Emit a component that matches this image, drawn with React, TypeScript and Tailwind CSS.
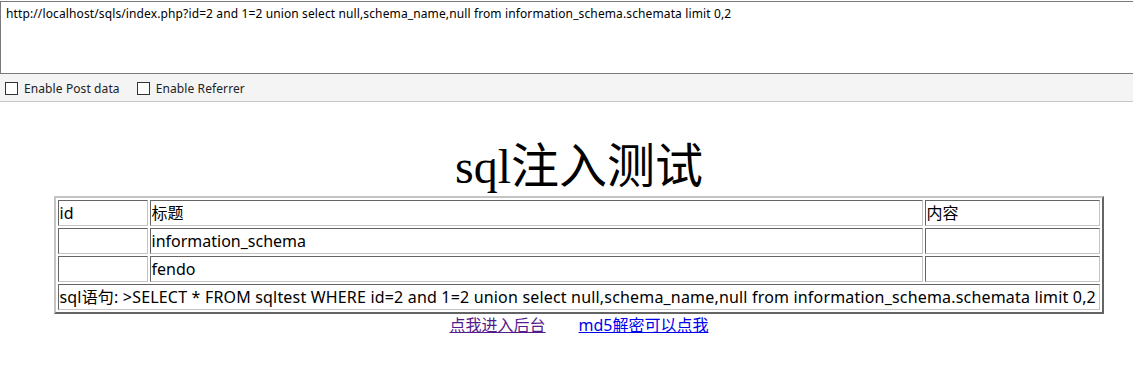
import React from "react";

const url =
  "http://localhost/sqls/index.php?id=2 and 1=2 union select null,schema_name,null from information_schema.schemata limit 0,2";

const rows = [
  { id: "", title: "information_schema", body: "" },
  { id: "", title: "fendo", body: "" },
];

const cell =
  "h-[26px] border border-t-[#646464] border-l-[#646464] border-b-[#c4c4c4] border-r-[#c4c4c4] px-px leading-[24px] whitespace-nowrap overflow-hidden";

function Check({ label }: { label: string }) {
  return (
    <label className="flex items-center">
      <span className="w-[13px] h-[13px] border border-[#333] bg-white" />
      <span className="ml-[6px] text-[12px] tracking-[0.1px] text-[#222]">{label}</span>
    </label>
  );
}

export default function App() {
  return (
    <div className="w-full min-h-[373px] bg-white overflow-hidden">
      {/* url box + hackbar options */}
      <div className="pt-px">
        <div className="h-[73px] border-t border-b border-l border-[#7a7a7a] pl-[5px] pt-[3px] text-[12px] tracking-[0.12px] text-black font-['Noto_Sans','Noto_Sans_CJK_SC',sans-serif] whitespace-nowrap">
          {url}
        </div>
        <div className="h-[28px] bg-[#f4f4f4] border-b border-[#c8c8c8] flex items-center gap-[17px] pl-[5px] pt-[2px] font-['Noto_Sans',sans-serif]">
          <Check label="Enable Post data" />
          <Check label="Enable Referrer" />
        </div>
      </div>

      <div className="w-[1158px] flex flex-col items-center">
        <div className="mt-[41px] h-[48px] leading-[48px] text-[48px] text-black font-['Liberation_Serif','Noto_Sans_CJK_SC',serif]">
          sql注入测试
        </div>

        <div className="mt-[5px] ml-[-1px] border-2 border-t-[#c4c4c4] border-l-[#c4c4c4] border-b-[#646464] border-r-[#646464] p-[2px] grid grid-cols-[90px_773px_175px] gap-[2px] text-[16px] text-black font-['Noto_Sans','Noto_Sans_CJK_SC',sans-serif]">
          <div className={cell}>id</div>
          <div className={cell}>标题</div>
          <div className={cell}>内容</div>
          {rows.map((r, i) => (
            <React.Fragment key={i}>
              <div className={cell}>{r.id}</div>
              <div className={cell}>{r.title}</div>
              <div className={cell}>{r.body}</div>
            </React.Fragment>
          ))}
          <div className={cell + " col-span-3 tracking-[0.18px]"}>
            sql语句: &gt;SELECT * FROM sqltest WHERE id=2 and 1=2 union select null,schema_name,null from information_schema.schemata limit 0,2
          </div>
        </div>

        <div className="h-[22px] leading-[22px] text-[16px] font-['Noto_Sans','Noto_Sans_CJK_SC',sans-serif]">
          <a href="#" className="underline text-[#551a8b]">点我进入后台</a>
          <a href="#" className="underline text-[#0000ee] ml-[33px]">md5解密可以点我</a>
        </div>
      </div>
    </div>
  );
}
